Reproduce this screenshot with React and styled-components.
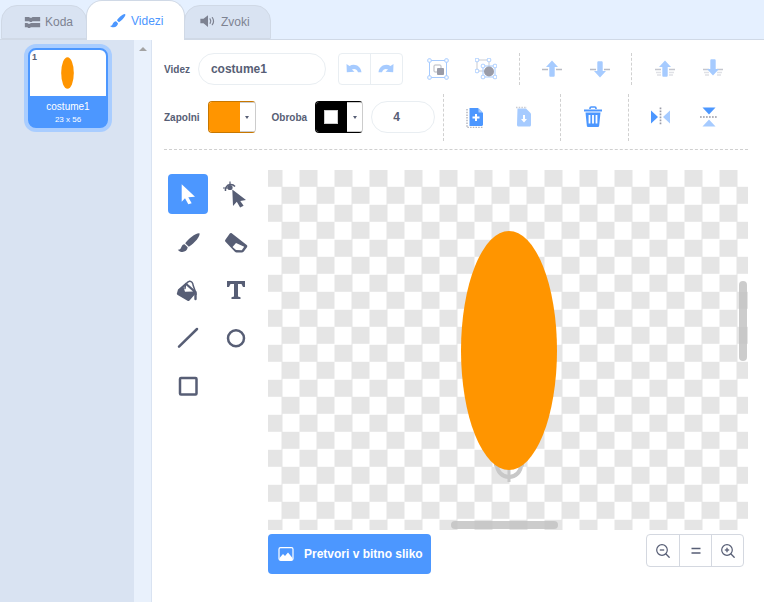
import React from 'react'
import styled, { createGlobalStyle } from 'styled-components'

const Global = createGlobalStyle`
  html, body {
    margin: 0;
    padding: 0;
    height: 100%;
    overflow: hidden;
    background: #fff;
    font-family: "Liberation Sans", Arial, sans-serif;
    color: #575e75;
  }
  * { box-sizing: border-box; }
`

const Page = styled.div`
  width: 764px;
  height: 602px;
  display: flex;
  flex-direction: column;
  overflow: hidden;
`

const TabBar = styled.div`
  height: 40px;
  flex: none;
  background: #e5f0ff;
  display: flex;
  align-items: flex-end;
  border-bottom: 1px solid #d0d9e6;
  padding-left: 1px;
`

const Tab = styled.div`
  height: ${p => (p.$active ? '40px' : '34px')};
  width: ${p => p.$width}px;
  margin: ${p => (p.$active ? '0 -1px -1px -1px' : '0')};
  position: relative;
  z-index: ${p => (p.$active ? 1 : 0)};
  display: flex;
  align-items: center;
  gap: 4px;
  padding-left: ${p => p.$pad}px;
  border: 1px solid #d0d9e6;
  border-bottom: ${p => (p.$active ? 'none' : '1px solid #d0d9e6')};
  border-radius: 16px 16px 0 0;
  background: ${p => (p.$active ? '#fff' : '#d9e3f2')};
  color: ${p => (p.$active ? '#4c97ff' : '#7d8291')};
  font-size: 12px;
  svg { flex: none; }
`

const Body = styled.div`
  flex: 1;
  display: flex;
  min-height: 0;
`

const Sidebar = styled.div`
  width: 134px;
  flex: none;
  background: #d9e3f2;
  padding: 4px 0 0 24px;
`

const SpriteRing = styled.div`
  width: 88px;
  height: 88px;
  padding: 4px;
  border-radius: 12px;
  background: #a9cdff;
`

const Sprite = styled.div`
  position: relative;
  height: 80px;
  border: 2px solid #4c97ff;
  border-radius: 8px;
  background: #4c97ff;
  overflow: hidden;
  display: flex;
  flex-direction: column;
`

const SpriteNumber = styled.span`
  position: absolute;
  top: 2px;
  left: 2px;
  font-size: 9px;
  font-weight: bold;
  color: #575e75;
`

const SpriteThumb = styled.div`
  height: 46px;
  flex: none;
  padding-right: 2px;
  background: #fff;
  display: flex;
  align-items: center;
  justify-content: center;
`

const SpriteName = styled.div`
  margin-top: 5px;
  font-size: 10px;
  line-height: 12px;
  text-align: center;
  color: #fff;
`

const SpriteSize = styled.div`
  font-size: 8px;
  line-height: 11px;
  margin-top: 1px;
  text-align: center;
  color: #fff;
`

const ListScroll = styled.div`
  width: 18px;
  flex: none;
  background: #e9f1fc;
  border-right: 1px solid #d9e3f2;
  padding: 7px 0 0 5px;
`

const ScrollArrow = styled.div`
  width: 0;
  height: 0;
  border-left: 4px solid transparent;
  border-right: 4px solid transparent;
  border-bottom: 4px solid #a3a3a3;
`

const Editor = styled.div`
  flex: 1;
  min-width: 0;
  padding: 13px 16px 0 12px;
  background: #fff;
`

const Row = styled.div`
  display: flex;
  align-items: center;
  height: 32px;
  margin-bottom: 16px;
`

const Label = styled.span`
  font-size: 10px;
  font-weight: bold;
  color: #575e75;
  margin-left: ${p => p.$before || 0}px;
  margin-right: ${p => p.$gap}px;
`

const NameInput = styled.div`
  width: 128px;
  height: 32px;
  padding-left: 12px;
  border: 1px solid #e9eef2;
  border-radius: 16px;
  font-size: 12px;
  font-weight: bold;
  line-height: 30px;
  color: #575e75;
`

const NumberInput = styled(NameInput)`
  width: 64px;
  margin-left: 8px;
  padding-left: 21px;
`

const ButtonPair = styled.div`
  display: flex;
  margin-left: 12px;
  width: 65px;
  height: 32px;
  border: 1px solid #e9eef2;
  border-radius: 4px;
`

const PairButton = styled.div`
  flex: 1;
  display: flex;
  align-items: center;
  justify-content: center;
  & + & { border-left: 1px solid #e9eef2; }
`

const Group = styled.div`
  display: flex;
  flex: none;
  align-items: center;
  height: ${p => (p.$tall ? '47px' : '32px')};
  margin-left: ${p => p.$offset || 0}px;
  padding: 0 ${p => p.$right ?? 8}px 0 ${p => p.$left ?? 8}px;
  border-left: ${p => (p.$plain ? 'none' : '1px dashed #d0d0d0')};
`

const IconButton = styled.div`
  width: 48px;
  height: 32px;
  display: flex;
  align-items: center;
  justify-content: center;
`

const Swatch = styled.div`
  width: 48px;
  height: 32px;
  display: flex;
  border: 1px solid ${p => p.$edge};
  border-right: 1px solid #ccc;
  border-radius: 4px;
  overflow: hidden;
  background: #fff;
`

const SwatchColor = styled.div`
  width: 32px;
  margin: -1px 0 -1px -1px;
  display: flex;
  align-items: center;
  justify-content: center;
  background: ${p => p.$color};
`

const SwatchInner = styled.div`
  width: 14px;
  height: 14px;
  background: #fff;
  border: 1px solid #ccc;
`

const SwatchCaret = styled.div`
  flex: 1;
  display: flex;
  align-items: center;
  justify-content: center;
  border-top: 1px solid #ccc;
  border-bottom: 1px solid #ccc;
  &::after {
    content: '';
    border-left: 2.5px solid transparent;
    border-right: 2.5px solid transparent;
    border-top: 3px solid #575e75;
  }
`

const DashedLine = styled.div`
  border-top: 1px dashed #d0d0d0;
  height: 1px;
`

const Work = styled.div`
  display: flex;
  margin-top: 20px;
`

const Tools = styled.div`
  width: 92px;
  flex: none;
  padding: 4px 0 0 4px;
  margin-right: 12px;
  display: grid;
  grid-template-columns: 40px 40px;
  grid-auto-rows: 40px;
  gap: 8px;
  align-content: start;
`

const Tool = styled.div`
  width: 40px;
  height: 40px;
  border-radius: 4px;
  background: ${p => (p.$active ? '#4c97ff' : 'transparent')};
  svg { display: block; }
`

const CanvasColumn = styled.div`
  width: 480px;
  flex: none;
`

const Canvas = styled.div`
  position: relative;
  width: 480px;
  height: 360px;
  overflow: hidden;
  background: conic-gradient(#e5e5e5 25%, #fff 0 50%, #e5e5e5 0 75%, #fff 0) -3.5px 16.8px / 35px 35px;
`

const Art = styled.svg`
  position: absolute;
  inset: 0;
`

const ScrollThumb = styled.div`
  position: absolute;
  border-radius: 4px;
  background: rgba(195, 195, 195, 0.85);
  ${p => (p.$vertical
    ? 'right: 1px; top: 111px; width: 8px; height: 80px;'
    : 'left: 183px; bottom: 1px; width: 107px; height: 8px;')}
`

const CanvasFooter = styled.div`
  display: flex;
  justify-content: space-between;
  align-items: flex-start;
  margin-top: 4px;
  padding-right: 4px;
`

const ConvertButton = styled.div`
  width: 163px;
  height: 40px;
  display: flex;
  align-items: center;
  gap: 10px;
  padding-left: 10px;
  border-radius: 4px;
  background: #4c97ff;
  color: #fff;
  font-size: 12px;
  font-weight: bold;
`

const ZoomControls = styled.div`
  display: flex;
  height: 33px;
  border: 1px solid #d4d8e0;
  border-radius: 4px;
`

const ZoomButton = styled.div`
  width: 32px;
  display: flex;
  align-items: center;
  justify-content: center;
  & + & { border-left: 1px solid #d4d8e0; }
`

const LIGHT = '#a6cbff'
const BLUE = '#4c97ff'
const DARK = '#575e75'

const Icon = ({ size = 20, view = 20, children }) => (
  <svg width={size} height={size} viewBox={`0 0 ${view} ${view}`} fill="none">{children}</svg>
)

const CodeIcon = () => (
  <Icon size={17}>
    <path d="M1 3.500h5l1 1h2l1-1h9v5h-9l-1 1H7l-1-1H1z" fill="#7d8291" />
    <path d="M1 10.500h3l1 1h2l1-1h11v5H8l-1 1H5l-1-1H1z" fill="#7d8291" />
  </Icon>
)

const BrushTabIcon = () => (
  <Icon size={18}>
    <path d="M17.500 2.200c.9.2.9 1.200.3 2.200-1.400 2.400-4.200 5.400-6.800 7l-2.200-2.200c2-2.800 5.900-6.600 8.700-7z" fill={BLUE} />
    <path d="M7.800 10.200l2.200 2.200c-.1 2.400-2.200 4.400-4.800 4.600-1.400.1-3.200-.4-4-1.400 1.600-.1 2.400-.9 2.900-2.200.6-1.800 1.900-3 3.700-3.200z" fill={BLUE} />
  </Icon>
)

const SoundIcon = () => (
  <Icon size={18}>
    <path d="M1.500 6.500H5L10 2.500v13L5 11.500H1.500z" fill="#7d8291" />
    <path d="M12.300 6.500c1 1.500 1 3.500 0 5M14.800 5c1.700 2.500 1.700 5.500 0 8" stroke="#7d8291" strokeWidth="1.300" strokeLinecap="round" />
  </Icon>
)

const UndoIcon = ({ flip }) => (
  <Icon size={20}>
    <path
      transform={flip ? 'matrix(-1 0 0 1 20 0)' : undefined}
      d="M2.500 5l.3 8.300 7.700-.5-2.600-2.300c2.400-1.300 5-.5 6.100 2.700h3.500c-.8-6.500-7.400-9.300-12-6.100z"
      fill={LIGHT}
    />
  </Icon>
)

const GroupIcon = () => (
  <Icon size={22} view={22}>
    <rect x="2.500" y="2.500" width="17" height="17" stroke={LIGHT} strokeWidth="1" />
    <rect x="7" y="7" width="7" height="7" rx="1" stroke="#b5b7bf" strokeWidth="1" />
    <rect x="10" y="10" width="7" height="7" rx="1" fill="#9a9ca8" />
    {[[2.500, 2.500], [19.500, 2.500], [2.500, 19.500], [19.500, 19.500]].map(([x, y]) => (
      <rect key={`${x}${y}`} x={x - 1.700} y={y - 1.700} width="3.400" height="3.400" rx="1" fill="#fff" stroke={LIGHT} />
    ))}
  </Icon>
)

const UngroupIcon = () => (
  <Icon size={22} view={22}>
    <rect x="2" y="2" width="12" height="11" stroke="#c9cbd2" strokeWidth="1" />
    <rect x="8" y="8" width="12" height="11" stroke={LIGHT} strokeWidth="1" />
    <circle cx="14" cy="13.500" r="5" fill="#9a9ca8" />
    {[[2, 2], [14, 2], [2, 13], [8, 8], [20, 8], [8, 19], [20, 19]].map(([x, y]) => (
      <rect key={`${x}${y}`} x={x - 1.700} y={y - 1.700} width="3.400" height="3.400" rx="1" fill="#fff" stroke={LIGHT} />
    ))}
  </Icon>
)

const LayerIcon = ({ down, bars }) => (
  <Icon size={22} view={22}>
    {bars === 1 && <path d="M1 11.500h6M15 11.500h6" stroke="#b9bbc4" strokeWidth="1.400" />}
    {bars === 2 && (
      <>
        <path d="M1 11.500h6M15 11.500h6" stroke="#c4c6ce" strokeWidth="1.300" />
        <path d="M2 14.500h5M15 14.500h5M3 17h4M15 17h4" stroke="#e0e1e6" strokeWidth="1.300" />
      </>
    )}
    <g transform={down ? `matrix(1 0 0 -1 0 ${bars === 2 ? 20 : 22})` : undefined}>
      <path d="M11 2.500l6 6.500h-3.300v8.500c0 .8-.5 1.300-1.200 1.300h-3c-.7 0-1.200-.5-1.200-1.300V9H5z" fill={LIGHT} />
    </g>
  </Icon>
)

const CopyIcon = () => (
  <Icon size={22} view={22}>
    <path d="M4.500 2h8.500l5 5v11.500c0 .8-.6 1.500-1.500 1.500h-12z" fill={BLUE} />
    <path d="M13.500 2l4.500 4.500h-4.500z" fill="#a6cbff" />
    <path d="M11 8v7M7.500 11.500h7" stroke="#fff" strokeWidth="2" />
    <path d="M2 3v18.500h16" stroke="#b5b7bf" strokeWidth="1.500" strokeDasharray="1.500 1.200" />
  </Icon>
)

const PasteIcon = () => (
  <Icon size={22} view={22}>
    <path d="M4.500 2.500h8.500l5 5v11.500c0 .8-.6 1.500-1.500 1.500h-11c-.8 0-1.500-.7-1.500-1.500z" fill={LIGHT} />
    <path d="M3 1.500h11" stroke="#c9cbd2" strokeWidth="1.300" strokeDasharray="1.500 1.200" />
    <path d="M11 9v6" stroke="#fff" strokeWidth="2" />
    <path d="M8 13l3 3.500 3-3.500z" fill="#fff" />
  </Icon>
)

const TrashIcon = () => (
  <Icon size={22} view={22}>
    <path d="M8 3V2.200C8 1.500 8.500 1 9.200 1h3.600c.7 0 1.200.5 1.200 1.200V3" stroke={BLUE} strokeWidth="1.600" />
    <path d="M2 3.500h18v2H2z" fill={BLUE} />
    <path d="M3.500 6.500h15l-1.300 13c-.1 1-.8 1.500-1.700 1.500h-9c-.9 0-1.600-.5-1.700-1.500z" fill={BLUE} />
    <path d="M7.500 9v8.500M11 9v8.500M14.500 9v8.500" stroke="#fff" strokeWidth="1.800" />
  </Icon>
)

const FlipHIcon = () => (
  <Icon size={22} view={22}>
    <path d="M1 4.500l7 6.500-7 6.500z" fill={BLUE} />
    <path d="M20 4.500l-7 6.500 7 6.500z" fill={LIGHT} />
    <path d="M10.500 1.500v18" stroke="#9a9ca8" strokeWidth="1.700" strokeDasharray="1.700 1.300" />
  </Icon>
)

const FlipVIcon = () => (
  <Icon size={22} view={22}>
    <path d="M4.500 1.500l6.500 7 6.500-7z" fill={BLUE} />
    <path d="M4.500 20.500l6.500-7 6.500 7z" fill={LIGHT} />
    <path d="M2 11h18" stroke="#9a9ca8" strokeWidth="1.700" strokeDasharray="1.700 1.300" />
  </Icon>
)

const arrow = 'M13.700 10.300L27 22.700l-6.700.6 3.400 6-3.400 1-3.300-6-3.300 3.400z'

const SelectIcon = () => (
  <Icon size={40} view={40}><path d={arrow} fill="#fff" /></Icon>
)

const ReshapeIcon = () => (
  <Icon size={40} view={40}>
    <path d="M9.500 17c-.5-3 1.200-6 4.500-6.500 2-.2 3.800.5 5 2" stroke={DARK} strokeWidth="1.500" />
    <path d="M14 7.500v4M7 14h5" stroke={DARK} strokeWidth="1.200" />
    <circle cx="14" cy="13.500" r="2.600" fill={DARK} />
    <path d="M16.300 15.500L30 26l-5.700 1 3.300 4.700-3.500 1.800-3.300-5.800-3.800 4.300z" fill={DARK} />
  </Icon>
)

const BrushIcon = () => (
  <Icon size={40} view={40}>
    <path d="M31.500 11.200c1 2.800-4.600 9.800-10.700 13.500l-3.600-3.400c3-4.800 11-10.800 14.300-10.100z" fill={DARK} />
    <path d="M16.500 22.300l3.200 3c-.3 3.200-3.200 5-6.200 4.600-1.300-.2-2.900-.9-3.700-2.200 2.400.1 2.900-1 3.600-2.600.6-1.600 1.500-2.700 3.100-2.800z" fill={DARK} />
  </Icon>
)

const EraserIcon = () => (
  <Icon size={40} view={40}>
    <path d="M15.700 11.300l15 11.700c.7.600.8 1.400.3 2.200l-3.200 4.300c-.6.700-1.300.9-2 .9h-5.300c-.6 0-1.100-.2-1.600-.7L9.500 19.800c-.6-.6-.6-1.400-.1-2l4.400-6.300c.5-.7 1.300-.7 1.900-.2z" fill={DARK} />
    <path d="M20 21l8.200 3.800-2.400 3.500-5.800-.2-3.500-3z" fill="#fff" />
  </Icon>
)

const FillIcon = () => (
  <Icon size={40} view={40}>
    <path d="M10 19.500l8-7 11 9.500-7.500 8.500c-.6.600-1.400.7-2 .3l-9.800-5.800c-.9-.5-1-1.300-.7-2z" fill={DARK} />
    <path d="M15.700 17.500l2.300-2.300 7 6.300-8 .3z" fill="#fff" />
    <path d="M17 18.500c-.2-3.500 2-6.800 4.500-7.300 2.200-.3 3.400 2 3.700 4.300l3 8.500" stroke={DARK} strokeWidth="1.500" strokeLinecap="round" />
    <path d="M27.500 24.500v4.500" stroke={DARK} strokeWidth="2.400" strokeLinecap="round" />
  </Icon>
)

const TextIcon = () => (
  <Icon size={40} view={40}>
    <path d="M11 11h18v6h-2l-1.500-3H22v12.500l2.500.7V29h-9v-1.800l2.500-.7V14h-3.500L13 17h-2z" fill={DARK} />
  </Icon>
)

const LineIcon = () => (
  <Icon size={40} view={40}>
    <path d="M11 28.700L29 11" stroke={DARK} strokeWidth="2.500" strokeLinecap="round" />
  </Icon>
)

const CircleIcon = () => (
  <Icon size={40} view={40}>
    <circle cx="20" cy="20.300" r="8" stroke={DARK} strokeWidth="2.500" />
  </Icon>
)

const SquareIcon = () => (
  <Icon size={40} view={40}>
    <rect x="12" y="12" width="16.500" height="16.500" rx="1" stroke={DARK} strokeWidth="2.500" />
  </Icon>
)

const PictureIcon = () => (
  <Icon size={16} view={16}>
    <path d="M2.500 1.700h11c.8 0 1.500.6 1.500 1.500v9.600c0 .8-.7 1.500-1.500 1.500h-11c-.8 0-1.500-.7-1.500-1.500V3.200c0-.9.700-1.500 1.500-1.500z" stroke="#fff" strokeWidth="1.200" />
    <path d="M1.500 12l3.500-4 2 2 3-3.500 4.500 5.500v2h-13z" fill="#fff" />
  </Icon>
)

const ZoomIcon = ({ plus }) => (
  <Icon size={16} view={16}>
    <circle cx="7" cy="7" r="5.300" stroke={DARK} strokeWidth="1.200" />
    <path d="M11 11l3.200 3.200" stroke={DARK} strokeWidth="1.300" strokeLinecap="round" />
    <path d="M4.800 7h4.400" stroke={DARK} strokeWidth="1.300" />
    {plus && <path d="M7 4.800v4.400" stroke={DARK} strokeWidth="1.300" />}
  </Icon>
)

const EqualIcon = () => (
  <Icon size={16} view={16}>
    <path d="M3.500 5.500h9M3.500 10h9" stroke={DARK} strokeWidth="1.500" />
  </Icon>
)

const tools = [
  <SelectIcon key="select" />,
  <ReshapeIcon key="reshape" />,
  <BrushIcon key="brush" />,
  <EraserIcon key="eraser" />,
  <FillIcon key="fill" />,
  <TextIcon key="text" />,
  <LineIcon key="line" />,
  <CircleIcon key="circle" />,
  <SquareIcon key="square" />,
]

const App = () => (
  <Page>
    <Global />
    <TabBar>
      <Tab $width={86} $pad={22}><CodeIcon />Koda</Tab>
      <Tab $active $width={99} $pad={22}><BrushTabIcon />Videzi</Tab>
      <Tab $width={87} $pad={14}><SoundIcon />Zvoki</Tab>
    </TabBar>
    <Body>
      <Sidebar>
        <SpriteRing>
          <Sprite>
            <SpriteNumber>1</SpriteNumber>
            <SpriteThumb>
              <svg width="13" height="32" viewBox="0 0 13 32">
                <ellipse cx="6.500" cy="16" rx="6.300" ry="15.800" fill="#ff9500" />
              </svg>
            </SpriteThumb>
            <SpriteName>costume1</SpriteName>
            <SpriteSize>23 x 56</SpriteSize>
          </Sprite>
        </SpriteRing>
      </Sidebar>
      <ListScroll><ScrollArrow /></ListScroll>
      <Editor>
        <Row>
          <Label $gap={8}>Videz</Label>
          <NameInput>costume1</NameInput>
          <ButtonPair>
            <PairButton><UndoIcon /></PairButton>
            <PairButton><UndoIcon flip /></PairButton>
          </ButtonPair>
          <Group $plain $offset={11} $left={0} $right={9}>
            <IconButton><GroupIcon /></IconButton>
            <IconButton><UngroupIcon /></IconButton>
          </Group>
          <Group $right={7}>
            <IconButton><LayerIcon bars={1} /></IconButton>
            <IconButton><LayerIcon down bars={1} /></IconButton>
          </Group>
          <Group $left={9}>
            <IconButton><LayerIcon bars={2} /></IconButton>
            <IconButton><LayerIcon down bars={2} /></IconButton>
          </Group>
        </Row>
        <Row>
          <Label $gap={8}>Zapolni</Label>
          <Swatch $edge="#c77700">
            <SwatchColor $color="#ff9500" />
            <SwatchCaret />
          </Swatch>
          <Label $before={16} $gap={8}>Obroba</Label>
          <Swatch $edge="#000">
            <SwatchColor $color="#000"><SwatchInner /></SwatchColor>
            <SwatchCaret />
          </Swatch>
          <NumberInput>4</NumberInput>
          <Group $tall $offset={8} $left={8} $right={12}>
            <IconButton><CopyIcon /></IconButton>
            <IconButton><PasteIcon /></IconButton>
          </Group>
          <Group $tall $left={8} $right={11}>
            <IconButton><TrashIcon /></IconButton>
          </Group>
          <Group $tall $left={8} $right={0}>
            <IconButton><FlipHIcon /></IconButton>
            <IconButton><FlipVIcon /></IconButton>
          </Group>
        </Row>
        <DashedLine />
        <Work>
          <Tools>
            {tools.map((icon, i) => (
              <Tool key={i} $active={i === 0}>{icon}</Tool>
            ))}
          </Tools>
          <CanvasColumn>
            <Canvas>
              <Art width="480" height="360" viewBox="0 0 480 360">
                <circle cx="241" cy="295" r="12" fill="none" stroke="#c8c8c8" strokeWidth="4" />
                <path d="M241 285v27M226 295h30" stroke="#c8c8c8" strokeWidth="3" />
                <ellipse cx="241" cy="180.500" rx="48" ry="119.500" fill="#ff9500" />
              </Art>
              <ScrollThumb $vertical />
              <ScrollThumb />
            </Canvas>
            <CanvasFooter>
              <ConvertButton><PictureIcon />Pretvori v bitno sliko</ConvertButton>
              <ZoomControls>
                <ZoomButton><ZoomIcon /></ZoomButton>
                <ZoomButton><EqualIcon /></ZoomButton>
                <ZoomButton><ZoomIcon plus /></ZoomButton>
              </ZoomControls>
            </CanvasFooter>
          </CanvasColumn>
        </Work>
      </Editor>
    </Body>
  </Page>
)

export default App
